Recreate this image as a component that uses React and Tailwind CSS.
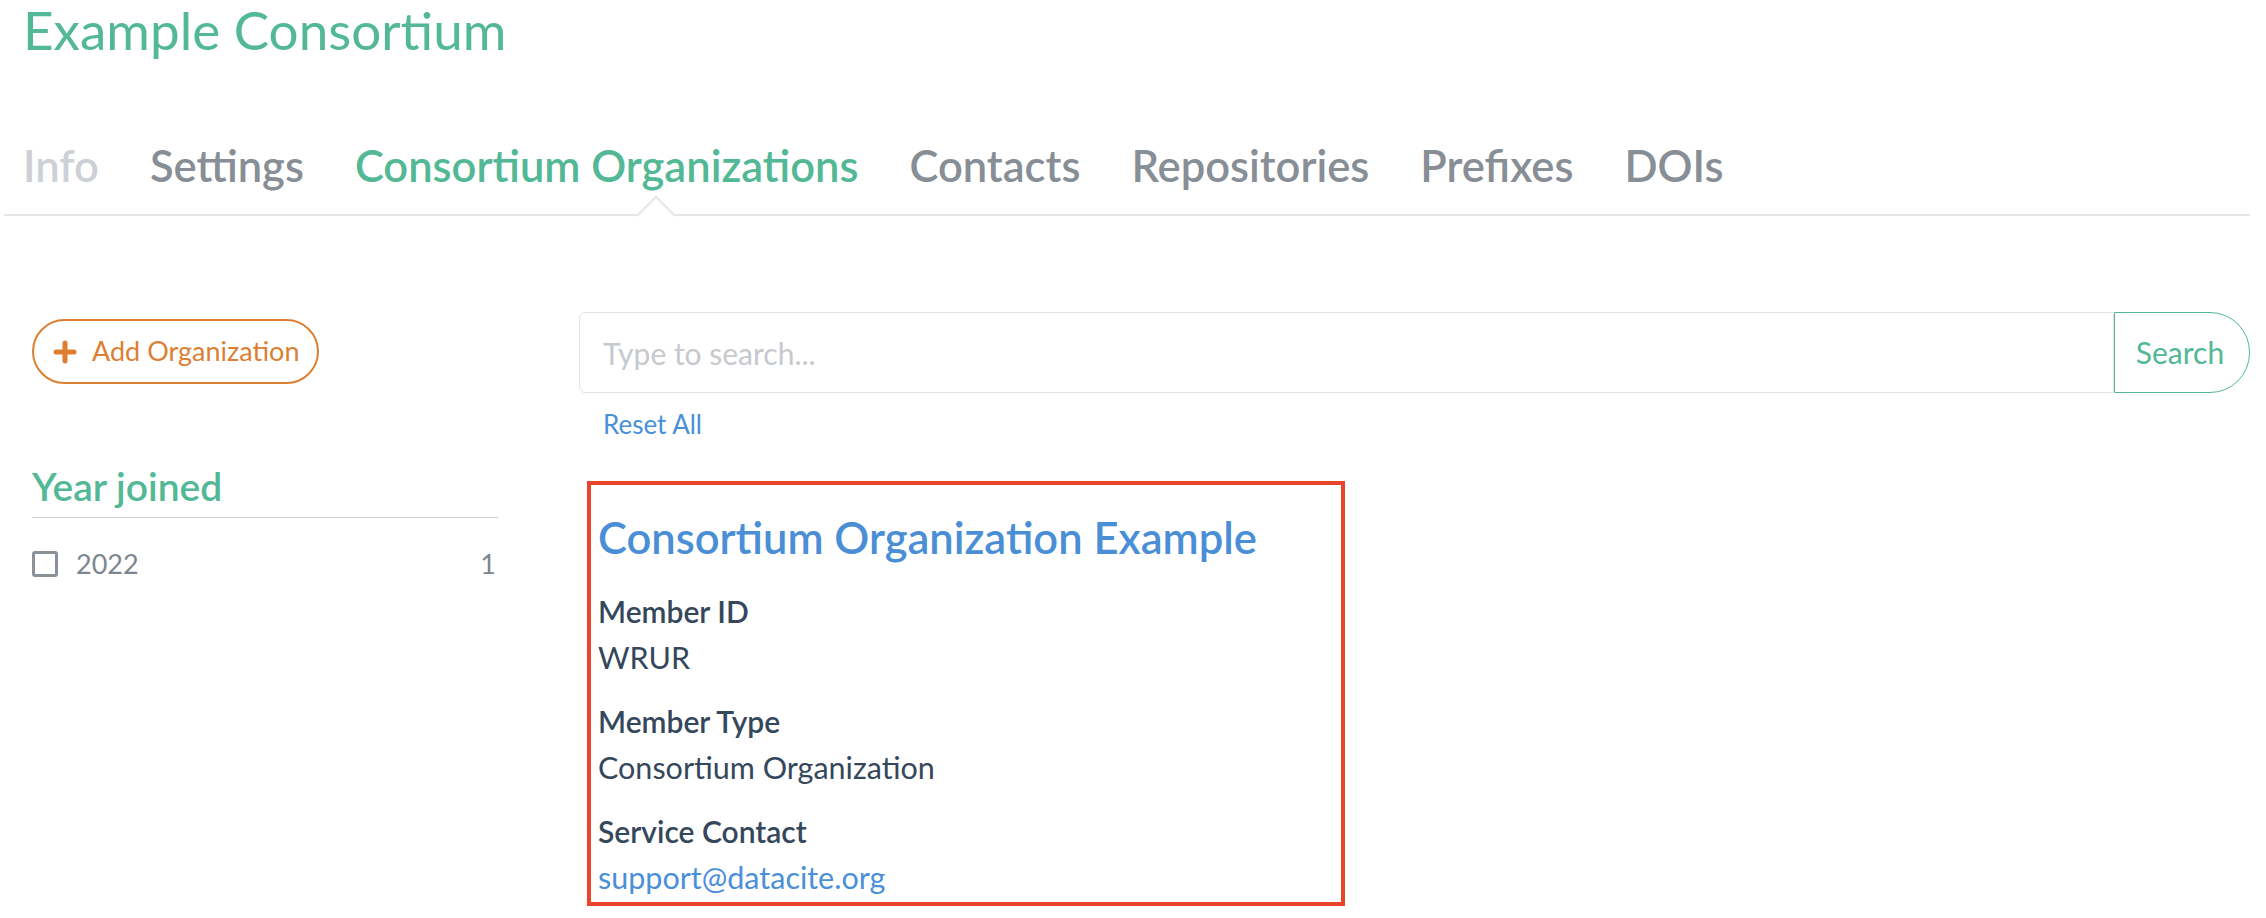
import React from 'react';

const tabs = ['Info', 'Settings', 'Consortium Organizations', 'Contacts', 'Repositories', 'Prefixes', 'DOIs'];

function Field({ label, children, last }) {
  return (
    <div className={last ? '' : 'mb-[18px]'}>
      <div className="text-[30px] leading-[46px] font-semibold text-[#34475b]">{label}</div>
      <div className="text-[30.5px] leading-[46px] text-[#34475b]">{children}</div>
    </div>
  );
}

export default function App() {
  return (
    <div className="w-[2266px] min-h-[918px] bg-white font-['Lato',sans-serif]">
      <div className="ml-[4px] w-[2246px]">
        <h1 className="pl-[19px] text-[53px] leading-[60px] font-normal text-[#53b895]">Example Consortium</h1>

        <nav className="relative mt-[80px] flex gap-[51px] pl-[19px] pb-[24px] border-b-2 border-[#e6e6e6]">
          {tabs.map((t) => (
            <span
              key={t}
              className={
                'text-[43.5px] leading-[50px] font-semibold whitespace-nowrap ' +
                (t === 'Info'
                  ? 'text-[#cdd1d5]'
                  : t === 'Consortium Organizations'
                  ? 'text-[#53b895]'
                  : 'text-[#878e95]')
              }
            >
              {t}
            </span>
          ))}
          <svg className="absolute left-[633px] top-[56px]" width="38" height="21" viewBox="0 0 38 21">
            <polyline points="0,20 19,1 38,20" fill="#fff" stroke="#e6e6e6" strokeWidth="2" />
          </svg>
        </nav>

        <div className="mt-[96px] flex gap-[81px]">
          {/* filters */}
          <aside className="w-[494px] pl-[28px] pt-[7px]">
            <button className="flex h-[65px] w-[287px] items-center gap-[15px] rounded-full border-2 border-[#dc7f33] pl-[19px] text-[27px] text-[#dc7f33]">
              <svg width="24" height="24" viewBox="0 0 24 24">
                <path d="M12 3v18M3 12h18" stroke="#dc7f33" strokeWidth="5" strokeLinecap="round" />
              </svg>
              Add Organization
            </button>

            <h3 className="mt-[80px] border-b border-[#cfcfcf] pb-[9px] text-[39px] leading-[44px] font-semibold text-[#53b895]">
              Year joined
            </h3>
            <div className="mt-[28px] flex items-center justify-between text-[27px] leading-[36px] text-[#7d858e]">
              <label className="flex items-center gap-[18px]">
                <span className="block h-[26px] w-[26px] rounded-[3px] border-[3px] border-[#8a9199]" />
                2022
              </label>
              <span className="pr-[2px]">1</span>
            </div>
          </aside>

          {/* results */}
          <main className="flex-1">
            <div className="flex h-[81px]">
              <input
                className="h-full flex-1 rounded-l-[6px] border border-[#e2e2e2] pl-[23px] text-[30px] text-[#34475b] outline-none placeholder:text-[#c6c9cd]"
                placeholder="Type to search..."
              />
              <button className="h-full w-[136px] rounded-r-[40px] border-[1.5px] border-[#53b895] pr-[4px] text-[30px] text-[#53b895]">
                Search
              </button>
            </div>
            <div className="mt-[15px] pl-[24px] text-[26px] leading-[32px] text-[#4a90d9]">Reset All</div>

            <div className="mt-[41px] ml-[8px] w-[758px] border-4 border-[#e9452b] pl-[7px] pt-[27px] pb-[2px]">
              <h2 className="mb-[26px] text-[43.5px] leading-[50px] font-semibold text-[#4a8fd6]">
                Consortium Organization Example
              </h2>
              <Field label="Member ID">WRUR</Field>
              <Field label="Member Type">Consortium Organization</Field>
              <Field label="Service Contact" last>
                <span className="text-[#4a90d9]">support@datacite.org</span>
              </Field>
            </div>
          </main>
        </div>
      </div>
    </div>
  );
}
